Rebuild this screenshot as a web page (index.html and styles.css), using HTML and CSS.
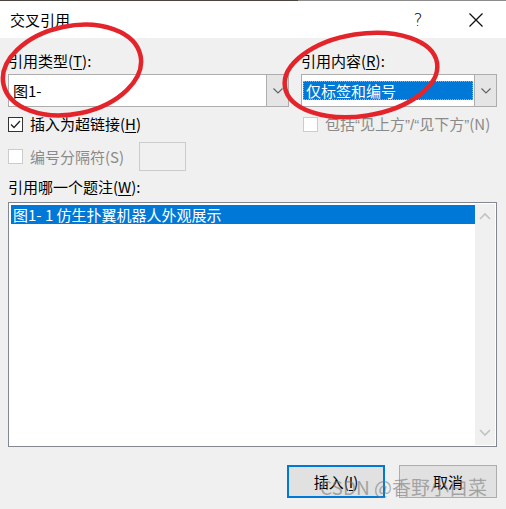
FILE: index.html
```html
<!DOCTYPE html>
<html lang="zh-CN">
<head>
<meta charset="utf-8">
<title>交叉引用</title>
<link rel="stylesheet" href="styles.css">
</head>
<body>
<div class="dialog">
  <div class="topline"><span class="dark"></span><span class="light"></span></div>
  <div class="titlebar">
    <span class="title">交叉引用</span>
    <span class="help">?</span>
    <span class="close"><svg width="16" height="16" viewBox="0 0 16 16"><path d="M1.5 1.5 L14.5 14.5 M14.5 1.5 L1.5 14.5" stroke="#111" stroke-width="1.3" fill="none"/></svg></span>
  </div>
  <div class="body">
    <div class="grid2">
      <div class="field">
        <div class="label">引用类型(<u>T</u>):</div>
        <div class="combo">
          <div class="combo-text">图1-</div>
          <div class="combo-btn"><svg width="10" height="6" viewBox="0 0 10 6"><path d="M0.5 0.5 L5 5 L9.5 0.5" stroke="#606060" stroke-width="1.1" fill="none"/></svg></div>
        </div>
      </div>
      <div class="field">
        <div class="label">引用内容(<u>R</u>):</div>
        <div class="combo">
          <div class="combo-text"><span class="sel">仅标签和编号</span></div>
          <div class="combo-btn"><svg width="10" height="6" viewBox="0 0 10 6"><path d="M0.5 0.5 L5 5 L9.5 0.5" stroke="#606060" stroke-width="1.1" fill="none"/></svg></div>
        </div>
      </div>
    </div>
    <div class="grid2 checks">
      <div class="check">
        <span class="box"><svg width="13" height="13" viewBox="0 0 13 13"><path d="M2 6.5 L5 9.5 L11 3" stroke="#222" stroke-width="1.3" fill="none"/></svg></span>
        <span>插入为超链接(<u>H</u>)</span>
      </div>
      <div class="check disabled">
        <span class="box"></span>
        <span class="nowrap">包括<span class="q">“</span>见上方<span class="q">”/“</span>见下方<span class="q">”</span>(N)</span>
      </div>
    </div>
    <div class="seprow">
      <div class="check disabled">
        <span class="box"></span>
        <span>编号分隔符(S)</span>
      </div>
      <div class="sepbox"></div>
    </div>
    <div class="label list-label">引用哪一个题注(<u>W</u>):</div>
    <div class="listbox">
      <div class="items">
        <div class="item selected">图1- 1 仿生扑翼机器人外观展示</div>
      </div>
      <div class="scroll">
        <svg width="12" height="8" viewBox="0 0 12 8"><path d="M1 7 L6 2 L11 7" stroke="#c2c2c2" stroke-width="1.6" fill="none"/></svg>
        <svg width="12" height="8" viewBox="0 0 12 8"><path d="M1 1 L6 6 L11 1" stroke="#c2c2c2" stroke-width="1.6" fill="none"/></svg>
      </div>
    </div>
    <div class="buttons">
      <div class="btn default">插入(<u>I</u>)</div>
      <div class="btn">取消</div>
    </div>
  </div>
  <svg class="marks" width="506" height="509" viewBox="0 0 506 509">
    <ellipse cx="72" cy="70" rx="70" ry="44" transform="rotate(-12 72 70)" fill="none" stroke="#e3242b" stroke-width="4.5"/>
    <ellipse cx="361" cy="75" rx="77" ry="41" transform="rotate(-9 361 75)" fill="none" stroke="#e3242b" stroke-width="4.5"/>
  </svg>
  <div class="watermark">CSDN @香野小白菜</div>
</div>
</body>
</html>
```
FILE: styles.css
```css
html, body {
  margin: 0;
  padding: 0;
}
body {
  width: 506px;
  height: 509px;
  overflow: hidden;
  background: #f0f0f0;
  font-family: "Noto Sans CJK SC", "Noto Sans", sans-serif;
  font-size: 15px;
  color: #000;
}
u { text-decoration: underline; text-underline-offset: 2px; }
.dialog {
  position: relative;
  width: 506px;
  height: 509px;
}
.topline {
  display: flex;
  height: 1px;
}
.topline .dark { width: 298px; background: #4b4540; }
.topline .light { flex: 1; background: #8c8c8c; }
.titlebar {
  height: 37px;
  background: #fff;
  display: flex;
  align-items: center;
  padding-left: 10px;
  line-height: 20px;
}
.title { flex: 1; }
.help {
  width: 20px;
  font-size: 17px;
  margin-right: 40px;
  text-align: center;
  font-family: "DejaVu Sans", sans-serif;
  font-weight: 300;
}
.close {
  width: 16px;
  height: 16px;
  margin-right: 22px;
  display: flex;
}
.body {
  padding: 12px 9px 0 8px;
}
.grid2 {
  display: grid;
  grid-template-columns: 281px 196px;
  column-gap: 12px;
}
.label {
  line-height: 22px;
  height: 22px;
  margin-bottom: 2px;
}
.combo {
  height: 33px;
  box-sizing: border-box;
  border: 1px solid #adadad;
  background: #fff;
  display: flex;
}
.combo-text {
  flex: 1;
  display: flex;
  align-items: center;
  padding-left: 1px;
  line-height: 20px;
}
.field:first-child .combo-text { padding-left: 4px; }
.sel {
  flex: 1;
  margin-right: 1px;
  background: #0078d7;
  color: #fff;
  padding: 0 3px;
  height: 19px;
  line-height: 19px;
  outline: 1px dotted #f0a030;
  outline-offset: -1px;
}
.combo-btn {
  width: 21px;
  background: #e5e5e5;
  border-left: 1px solid #adadad;
  display: flex;
  align-items: center;
  justify-content: center;
}
.checks {
  margin-top: 7px;
}
.check {
  display: flex;
  align-items: center;
  height: 20px;
  line-height: 20px;
}
.nowrap { white-space: nowrap; }
.q { font-family: "Liberation Sans", sans-serif; }
.box {
  width: 15px;
  height: 15px;
  box-sizing: border-box;
  border: 1px solid #333;
  background: #fff;
  margin-right: 7px;
  display: flex;
  align-items: center;
  justify-content: center;
  flex: none;
}
.check.disabled { color: #8a8a8a; }
.check.disabled .box { border-color: #cccccc; }
.checks .check.disabled { padding-left: 2px; }
.seprow {
  display: flex;
  align-items: center;
  margin-top: 8px;
  height: 29px;
}
.sepbox {
  width: 47px;
  height: 29px;
  box-sizing: border-box;
  border: 1px solid #cccccc;
  background: #f0f0f0;
  margin-left: 15px;
}
.list-label {
  margin-top: 5px;
  margin-bottom: 4px;
}
.listbox {
  height: 245px;
  box-sizing: border-box;
  border: 1px solid #828790;
  background: #fff;
  display: flex;
  padding: 1px 1px 1px 1px;
}
.items {
  flex: 1;
  padding-top: 1px;
}
.item {
  height: 19px;
  line-height: 19px;
  padding-left: 2px;
  margin-left: 1px;
}
.item.selected {
  background: #0078d7;
  color: #fff;
}
.scroll {
  width: 20px;
  background: #f0f0f0;
  display: flex;
  flex-direction: column;
  align-items: center;
  justify-content: space-between;
  padding: 8px 0 8px;
}
.buttons {
  display: flex;
  justify-content: flex-end;
  gap: 14px;
  margin-top: 18px;
}
.btn {
  width: 98px;
  height: 33px;
  box-sizing: border-box;
  border: 1px solid #adadad;
  background: #e1e1e1;
  display: flex;
  align-items: center;
  justify-content: center;
  line-height: 20px;
}
.btn.default {
  border: 2px solid #0078d7;
}
.marks {
  position: absolute;
  left: 0;
  top: 0;
  pointer-events: none;
}
.watermark {
  position: absolute;
  left: 320px;
  top: 474px;
  font-size: 19px;
  line-height: 26px;
  color: rgba(120, 120, 120, 0.6);
  font-family: "Noto Sans CJK SC", "Noto Sans", sans-serif;
  white-space: nowrap;
}
```
